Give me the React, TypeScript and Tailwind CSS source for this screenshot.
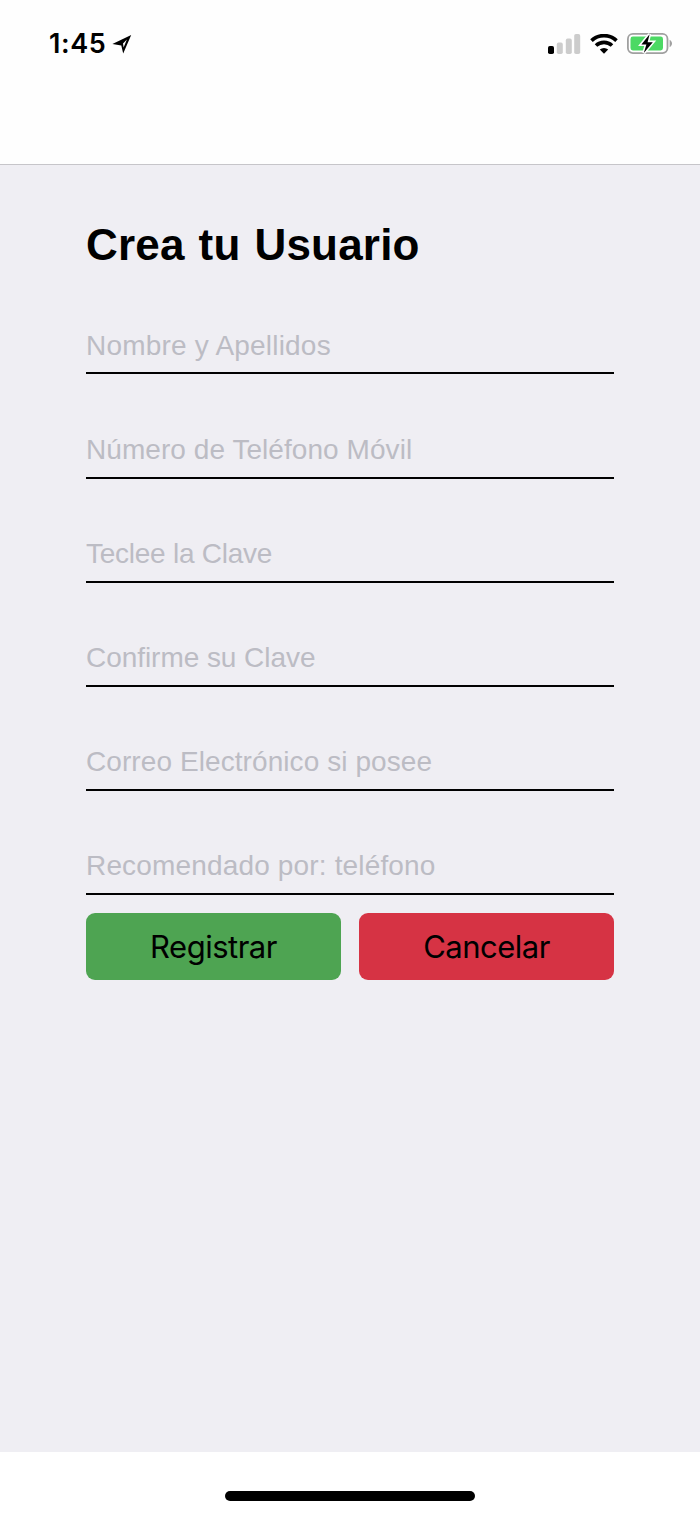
import React, { useState } from 'react';

interface Field {
  name: string;
  placeholder: string;
  type: string;
  className: string;
}

const fields: Field[] = [
  { name: 'nombre', placeholder: 'Nombre y Apellidos', type: 'text', className: 'h-[53px] pb-[2px] tracking-[0.2px]' },
  { name: 'movil', placeholder: 'Número de Teléfono Móvil', type: 'tel', className: 'h-[53px] pb-[3px] tracking-[0.06px]' },
  { name: 'clave', placeholder: 'Teclee la Clave', type: 'password', className: 'h-[52px] pb-[4px] tracking-[-0.25px]' },
  { name: 'confirmar', placeholder: 'Confirme su Clave', type: 'password', className: 'h-[52px] pb-[4px] tracking-[-0.05px]' },
  { name: 'correo', placeholder: 'Correo Electrónico si posee', type: 'email', className: 'h-[52px] pb-[4px] tracking-[0.08px]' },
  { name: 'recomendado', placeholder: 'Recomendado por: teléfono', type: 'tel', className: 'h-[52px] pb-[4px] tracking-[0.16px]' },
];

const LocationIcon = () => (
  <svg width="20" height="20" viewBox="0 0 20 20" fill="none">
    <path
      d="M0.4 10L19.2 1L11.2 19.6L9.3 11.6Z M11 9.4L11.6 13.4L14.9 5.6Z"
      fill="#000"
      fillRule="evenodd"
    />
  </svg>
);

const SignalIcon = () => (
  <svg width="33" height="21" viewBox="0 0 33 21">
    <rect x="0" y="12" width="6" height="8" rx="1.8" fill="#000" />
    <rect x="8.8" y="8.6" width="6" height="11.4" rx="1.8" fill="#ccc" />
    <rect x="17.8" y="4.6" width="6" height="15.4" rx="1.8" fill="#ccc" />
    <rect x="26.2" y="0" width="6" height="20" rx="1.8" fill="#ccc" />
  </svg>
);

const WifiIcon = () => (
  <svg width="28" height="21" viewBox="0 0 28 21" fill="none" stroke="#000" strokeWidth="3.7">
    <path d="M1.5 6.6A18.2 18.2 0 0 1 26.5 6.6" />
    <path d="M6 11.5A11.7 11.7 0 0 1 22 11.5" />
    <path d="M14 19.8L9.8 15.6A6.3 6.3 0 0 1 18.2 15.6Z" fill="#000" stroke="none" />
  </svg>
);

const BatteryIcon = () => (
  <svg width="46" height="22" viewBox="0 0 46 22">
    <rect x="0.9" y="0.9" width="39.6" height="19.2" rx="5" fill="#fff" stroke="#a0a0a0" strokeWidth="1.8" />
    <rect x="3.5" y="3.5" width="32.5" height="14" rx="2.4" fill="#4cd964" />
    <path d="M42.6 6.8C44.2 7.8 45 9 45 10.5C45 12 44.2 13.2 42.6 14.2Z" fill="#a0a0a0" />
    <path
      d="M22.6 1.2L14.4 11.4H19.4L16.8 20L25.8 9.2H20.6Z"
      fill="#000"
      stroke="#fff"
      strokeWidth="3.2"
      paintOrder="stroke"
    />
  </svg>
);

const App: React.FC = () => {
  const [values, setValues] = useState<Record<string, string>>({});

  const handleChange = (e: React.ChangeEvent<HTMLInputElement>) => {
    setValues({ ...values, [e.target.name]: e.target.value });
  };

  return (
    <div className="flex h-[1516px] w-[700px] flex-col bg-[#efeef3] font-['Liberation_Sans',sans-serif] text-black">
      {/* Status bar */}
      <header className="flex h-[165px] items-start justify-between border-b border-[#c6c5c9] bg-[#fefefe] pt-[33px] pr-[27px] pl-[49px]">
        <div className="flex items-center gap-[6px]">
          <span className="font-['Inter',sans-serif] text-[27px] leading-[22px] font-semibold tracking-[0.6px]">1:45</span>
          <LocationIcon />
        </div>
        <div className="flex items-center">
          <SignalIcon />
          <div className="ml-[9px]">
            <WifiIcon />
          </div>
          <div className="ml-[9px]">
            <BatteryIcon />
          </div>
        </div>
      </header>

      <main className="flex-1 px-[86px] pt-[54px]">
        <h1 className="text-[44px] leading-[52px] font-bold tracking-[0.2px] [word-spacing:1.5px]">Crea tu Usuario</h1>

        <form className="mt-[50px]" onSubmit={(e) => e.preventDefault()}>
          <div className="flex flex-col gap-[52px]">
            {fields.map((field) => (
              <input
                key={field.name}
                name={field.name}
                type={field.type}
                placeholder={field.placeholder}
                value={values[field.name] ?? ''}
                onChange={handleChange}
                className={`${field.className} w-full border-b-2 border-black bg-transparent text-[28px] outline-none placeholder:text-[#bcbcc4]`}
              />
            ))}
          </div>

          {/* Actions */}
          <div className="mt-[18px] grid grid-cols-2 gap-[18px] font-['Inter',sans-serif] text-[31px] tracking-[-0.5px]">
            <button type="submit" className="h-[67px] rounded-[9px] bg-[#4ea452] pt-[2px]">
              Registrar
            </button>
            <button type="button" className="h-[67px] rounded-[9px] bg-[#d63344] pt-[2px]">
              Cancelar
            </button>
          </div>
        </form>
      </main>

      {/* Home indicator */}
      <footer className="flex h-16 justify-center bg-white pt-[39px]">
        <div className="h-[10px] w-[250px] rounded-full bg-black" />
      </footer>
    </div>
  );
};

export default App;
